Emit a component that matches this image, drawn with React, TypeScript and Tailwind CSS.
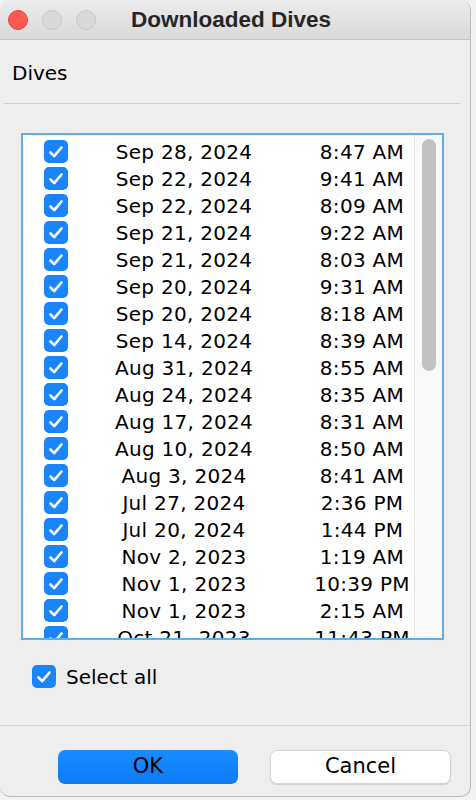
import { useState } from "react";

const dives: [string, string][] = [
  ["Sep 28, 2024", "8:47 AM"],
  ["Sep 22, 2024", "9:41 AM"],
  ["Sep 22, 2024", "8:09 AM"],
  ["Sep 21, 2024", "9:22 AM"],
  ["Sep 21, 2024", "8:03 AM"],
  ["Sep 20, 2024", "9:31 AM"],
  ["Sep 20, 2024", "8:18 AM"],
  ["Sep 14, 2024", "8:39 AM"],
  ["Aug 31, 2024", "8:55 AM"],
  ["Aug 24, 2024", "8:35 AM"],
  ["Aug 17, 2024", "8:31 AM"],
  ["Aug 10, 2024", "8:50 AM"],
  ["Aug 3, 2024", "8:41 AM"],
  ["Jul 27, 2024", "2:36 PM"],
  ["Jul 20, 2024", "1:44 PM"],
  ["Nov 2, 2023", "1:19 AM"],
  ["Nov 1, 2023", "10:39 PM"],
  ["Nov 1, 2023", "2:15 AM"],
  ["Oct 21, 2023", "11:43 PM"],
];

function Check({ checked, onClick }: { checked: boolean; onClick?: () => void }) {
  return (
    <button
      onClick={onClick}
      className={
        checked
          ? "w-[24px] h-[23px] rounded-[5px] bg-[#1a84fb] flex items-center justify-center shrink-0"
          : "w-[24px] h-[23px] rounded-[5px] bg-white border border-[#b5b5b5] shrink-0"
      }
    >
      {checked && (
        <svg width="16" height="14" viewBox="0 0 16 14" fill="none">
          <path d="M2.5 7.5 L6.2 11.2 L13.5 2.5" stroke="white" strokeWidth="2.6" strokeLinecap="round" strokeLinejoin="round" />
        </svg>
      )}
    </button>
  );
}

export default function App() {
  const [checked, setChecked] = useState(dives.map(() => true));
  const allChecked = checked.every(Boolean);

  return (
    <div className="w-[476px] h-[800px] bg-[#f3f3f3] overflow-hidden" style={{ fontFamily: '"DejaVu Sans", sans-serif' }}>
      <div className="w-[471px] h-[797px] bg-[#eeeeee] rounded-[10px] border-r border-b border-[#b9b9b9] overflow-hidden flex flex-col">
        {/* title bar */}
        <div className="h-[40px] shrink-0 bg-gradient-to-b from-[#ececec] to-[#d9d9d9] border-b border-[#c4c4c4] relative flex items-center">
          <div className="flex gap-[14px] pl-[8px]">
            <div className="w-[20px] h-[20px] rounded-full bg-[#fd5a52] border border-[#e2463f]" />
            <div className="w-[20px] h-[20px] rounded-full bg-[#d9d9d9] border border-[#c6c6c6]" />
            <div className="w-[20px] h-[20px] rounded-full bg-[#d9d9d9] border border-[#c6c6c6]" />
          </div>
          <div
            className="absolute left-0 right-0 text-center text-[22.5px] font-bold text-[#262626] pr-[8px]"
            style={{ fontFamily: '"Liberation Sans", Arial, sans-serif' }}
          >
            Downloaded Dives
          </div>
        </div>

        <div className="pl-[12px] pt-[21px] h-[63px] text-[20px] text-black leading-[24px]">Dives</div>
        <div className="mx-[4px] mr-[10px] h-px bg-[#cfcfcf]" />

        {/* list */}
        <div className="ml-[21px] mr-[26px] mt-[29px] h-[507px] border-2 border-[#5aaeea] bg-white flex">
          <div className="flex-1 min-w-0 pt-[3px] overflow-hidden">
            {dives.map(([d, t], i) => (
              <div key={i} className="h-[27px] flex items-center text-[20px] text-black tracking-[0.3px]">
                <div className="w-[46px] shrink-0 pl-[21px] flex">
                  <Check
                    checked={checked[i]}
                    onClick={() => setChecked(checked.map((c, j) => (j === i ? !c : c)))}
                  />
                </div>
                <div className="w-[230px] shrink-0 text-center">{d}</div>
                <div className="w-[126px] shrink-0 text-center">{t}</div>
              </div>
            ))}
          </div>
          <div className="w-[28px] shrink-0 bg-[#f9f9f9] border-l border-[#e6e6e6] pt-[4px] flex justify-center">
            <div className="w-[14px] h-[232px] rounded-full bg-[#c2c2c2]" />
          </div>
        </div>

        <div className="pl-[32px] pt-[18px] flex items-center gap-[10px] h-[55px]">
          <Check checked={allChecked} onClick={() => setChecked(dives.map(() => !allChecked))} />
          <span className="text-[20px] text-black">Select all</span>
        </div>

        <div className="mt-[30px] h-px bg-[#d2d2d2]" />

        <div className="flex pl-[58px] gap-[32px] pt-[24px]">
          <button className="w-[180px] h-[34px] rounded-[7px] bg-gradient-to-b from-[#1a8cff] to-[#0a7bf5] text-[21px] text-black">
            OK
          </button>
          <button className="w-[181px] h-[34px] rounded-[7px] bg-white border border-[#d4d4d4] shadow-[0_1px_1px_rgba(0,0,0,0.12)] text-[21px] text-black">
            Cancel
          </button>
        </div>
      </div>
    </div>
  );
}
